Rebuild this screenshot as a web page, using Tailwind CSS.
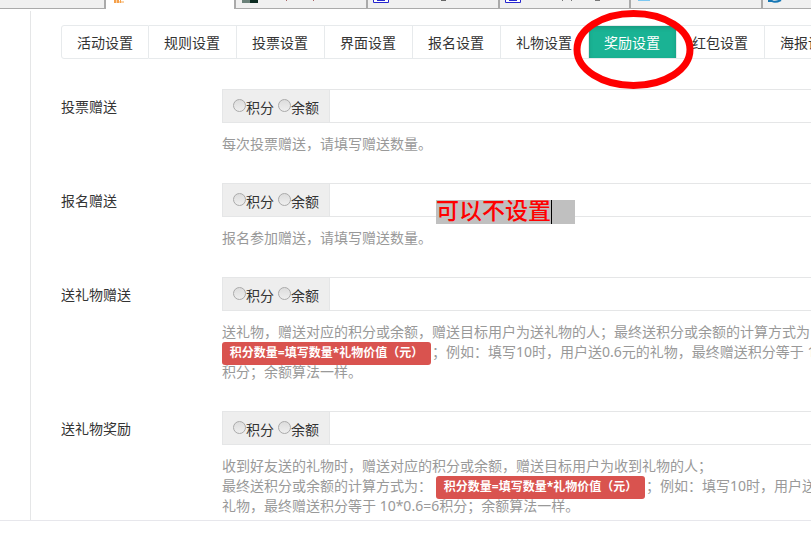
<!DOCTYPE html>
<html lang="zh-CN">
<head>
<meta charset="utf-8">
<meta name="viewport" content="width=device-width, initial-scale=1">
<title>奖励设置</title>
<script src="https://cdn.jsdelivr.net/npm/@tailwindcss/browser@4"></script>
</head>
<body class="relative overflow-hidden bg-white font-['Noto_Sans','Noto_Sans_CJK_SC',sans-serif] text-sm leading-5 text-[#333]">

<!-- Browser tab strip -->
<div class="flex h-[9px] overflow-hidden bg-[#f0f0f0]" aria-hidden="true">
  <div class="w-[106px] shrink-0 border-r-2 border-b border-[#aaa]"></div>
  <div class="w-[128px] shrink-0 bg-white pl-2">
    <svg class="block" width="10" height="3" viewBox="0 0 10 3"><path fill="#f5a04a" d="M0 0h2v3H0zM3 0h2v3H3zM6 0h1v3H6z"/><path fill="#fbd3a8" d="M2 0h1v3H2zM5 1h1v2H5zM7 1h3v2H7z"/></svg>
  </div>
  <div class="w-[132px] shrink-0 border-b border-l-2 border-[#aaa] pl-[6px]">
    <svg class="block" width="80" height="3" viewBox="0 0 80 3"><path fill="#6b8179" d="M0 0h8v3H0z"/><path fill="#0b2a20" d="M8 0h8v3H8z"/><path fill="#a66" d="M44 0h1v1h-1zM71 0h1v1h-1z"/></svg>
  </div>
  <div class="w-[132px] shrink-0 border-b border-l-2 border-[#aaa] pl-[5px]">
    <svg class="block" width="90" height="3" viewBox="0 0 90 3"><path fill="#fff" stroke="#2626cf" d="M.5-1v3.500h15V-1"/><path fill="#2626cf" d="M4 0h8v1H4z"/><path fill="#666" d="M68 0h5v1h-5z"/></svg>
  </div>
  <div class="w-[131px] shrink-0 border-b border-l-2 border-[#aaa] pl-[5px]">
    <svg class="block" width="100" height="3" viewBox="0 0 100 3"><path fill="#fff" stroke="#2626cf" d="M.5-1v3.500h15V-1"/><path fill="#2626cf" d="M4 0h8v1H4z"/><path fill="#777" d="M57 0h1v1h-1zM66 0h1v1h-1zM90 0h5v1h-5z"/></svg>
  </div>
  <div class="w-[132px] shrink-0 border-b border-l-2 border-[#aaa] pl-[7px]">
    <svg class="block" width="14" height="3" viewBox="0 0 14 3"><path fill="#7cc8f2" d="M0 0h12v1H0z"/></svg>
  </div>
  <div class="grow border-b border-l-2 border-[#aaa] pl-[5px]">
    <svg class="block" width="14" height="3" viewBox="0 0 14 3"><path fill="none" stroke="#1677b5" stroke-width="2" d="M0 1h4q3 2 9-1"/></svg>
  </div>
</div>

<main class="mt-[2px] overflow-hidden border-b border-[#e7e7ec]">
  <div class="ml-[30px] border-l border-[#e5e6e7] pt-[14px] pb-1 pl-[30px]">

    <nav class="mb-[30px] flex h-[34px] whitespace-nowrap" aria-label="设置">
      <a href="#" class="w-[88px] shrink-0 rounded-l-[3px] border border-[#e7eaec] pt-[7px] text-center">活动设置</a>
      <a href="#" class="w-[88px] shrink-0 border-y border-r border-[#e7eaec] pt-[7px] pl-[15px]">规则设置</a>
      <a href="#" class="w-[88px] shrink-0 border-y border-r border-[#e7eaec] pt-[7px] pl-[15px]">投票设置</a>
      <a href="#" class="w-[88px] shrink-0 border-y border-r border-[#e7eaec] pt-[7px] pl-[15px]">界面设置</a>
      <a href="#" class="w-[88px] shrink-0 border-y border-r border-[#e7eaec] pt-[7px] pl-[15px]">报名设置</a>
      <a href="#" class="w-[88px] shrink-0 border-y border-r border-[#e7eaec] pt-[7px] pl-[15px]">礼物设置</a>
      <a href="#" aria-current="page" class="w-[88px] shrink-0 border-y border-r border-[#e7eaec] bg-[#1ab394] bg-clip-padding pt-[7px] pl-[15px] text-white inset-shadow-[0_2px_4px_rgb(0_0_0/0.15)]">奖励设置</a>
      <a href="#" class="w-[88px] shrink-0 border-y border-r border-[#e7eaec] pt-[7px] pl-[15px]">红包设置</a>
      <a href="#" class="w-[88px] shrink-0 border-y border-r border-[#e7eaec] pt-[7px] pl-[15px]">海报设置</a>
    </nav>

    <form class="flex flex-col gap-[29px]">
      <div class="flex">
        <label for="vote" class="w-[161px] shrink-0 pt-2">投票赠送</label>
        <div class="min-w-0 grow whitespace-nowrap">
          <div class="flex h-[34px] border-y border-l border-[#e5e6e7]">
            <div class="flex w-[107px] shrink-0 items-center gap-1 border-r border-[#e5e6e7] bg-[#eee] pl-[10px]">
              <label class="flex items-center pt-[3px]"><input type="radio" name="vote-kind" class="mb-[4px] size-[13px] appearance-none rounded-full border border-[#aaa] bg-linear-to-b from-[#ddd] to-[#eee]">积分</label>
              <label class="flex items-center pt-[3px]"><input type="radio" name="vote-kind" class="mb-[4px] size-[13px] appearance-none rounded-full border border-[#aaa] bg-linear-to-b from-[#ddd] to-[#eee]">余额</label>
            </div>
            <input id="vote" type="text" class="min-w-0 grow px-3 outline-none">
          </div>
          <p class="mt-[11px] text-[#999]">每次投票赠送，请填写赠送数量。</p>
        </div>
      </div>

      <div class="flex">
        <label for="join" class="w-[161px] shrink-0 pt-2">报名赠送</label>
        <div class="min-w-0 grow whitespace-nowrap">
          <div class="flex h-[34px] border-y border-l border-[#e5e6e7]">
            <div class="flex w-[107px] shrink-0 items-center gap-1 border-r border-[#e5e6e7] bg-[#eee] pl-[10px]">
              <label class="flex items-center pt-[3px]"><input type="radio" name="join-kind" class="mb-[4px] size-[13px] appearance-none rounded-full border border-[#aaa] bg-linear-to-b from-[#ddd] to-[#eee]">积分</label>
              <label class="flex items-center pt-[3px]"><input type="radio" name="join-kind" class="mb-[4px] size-[13px] appearance-none rounded-full border border-[#aaa] bg-linear-to-b from-[#ddd] to-[#eee]">余额</label>
            </div>
            <input id="join" type="text" class="min-w-0 grow px-3 outline-none">
          </div>
          <p class="mt-[11px] text-[#999]">报名参加赠送，请填写赠送数量。</p>
        </div>
      </div>

      <div class="flex">
        <label for="gift" class="w-[161px] shrink-0 pt-2">送礼物赠送</label>
        <div class="min-w-0 grow whitespace-nowrap">
          <div class="flex h-[34px] border-y border-l border-[#e5e6e7]">
            <div class="flex w-[107px] shrink-0 items-center gap-1 border-r border-[#e5e6e7] bg-[#eee] pl-[10px]">
              <label class="flex items-center pt-[3px]"><input type="radio" name="gift-kind" class="mb-[4px] size-[13px] appearance-none rounded-full border border-[#aaa] bg-linear-to-b from-[#ddd] to-[#eee]">积分</label>
              <label class="flex items-center pt-[3px]"><input type="radio" name="gift-kind" class="mb-[4px] size-[13px] appearance-none rounded-full border border-[#aaa] bg-linear-to-b from-[#ddd] to-[#eee]">余额</label>
            </div>
            <input id="gift" type="text" class="min-w-0 grow px-3 outline-none">
          </div>
          <div class="mt-[11px] text-[#999]">
            <p>送礼物，赠送对应的积分或余额，赠送目标用户为送礼物的人；最终送积分或余额的计算方式为</p>
            <p class="flex h-5 items-start"><strong class="h-[23px] w-[209px] shrink-0 rounded-[3px] bg-[#d9534f] text-center text-xs leading-[22px] font-bold text-white">积分数量=填写数量*礼物价值（元）</strong><span class="pl-px">；例如：填写10时，用户送0.6元的礼物，最终赠送积分等于 1</span></p>
            <p>积分；余额算法一样。</p>
          </div>
        </div>
      </div>

      <div class="flex">
        <label for="reward" class="w-[161px] shrink-0 pt-2">送礼物奖励</label>
        <div class="min-w-0 grow whitespace-nowrap">
          <div class="flex h-[34px] border-y border-l border-[#e5e6e7]">
            <div class="flex w-[107px] shrink-0 items-center gap-1 border-r border-[#e5e6e7] bg-[#eee] pl-[10px]">
              <label class="flex items-center pt-[3px]"><input type="radio" name="reward-kind" class="mb-[4px] size-[13px] appearance-none rounded-full border border-[#aaa] bg-linear-to-b from-[#ddd] to-[#eee]">积分</label>
              <label class="flex items-center pt-[3px]"><input type="radio" name="reward-kind" class="mb-[4px] size-[13px] appearance-none rounded-full border border-[#aaa] bg-linear-to-b from-[#ddd] to-[#eee]">余额</label>
            </div>
            <input id="reward" type="text" class="min-w-0 grow px-3 outline-none">
          </div>
          <div class="mt-[11px] text-[#999]">
            <p>收到好友送的礼物时，赠送对应的积分或余额，赠送目标用户为收到礼物的人；</p>
            <p class="flex h-5 items-start"><span class="pr-1">最终送积分或余额的计算方式为：</span><strong class="h-[23px] w-[209px] shrink-0 rounded-[3px] bg-[#d9534f] text-center text-xs leading-[22px] font-bold text-white">积分数量=填写数量*礼物价值（元）</strong><span class="pl-px">；例如：填写10时，用户送</span></p>
            <p>礼物，最终赠送积分等于 10*0.6=6积分；余额算法一样。</p>
          </div>
        </div>
      </div>
    </form>
  </div>
</main>

<!-- Annotations laid over the page -->
<svg class="pointer-events-none absolute top-[9px] left-[573px]" width="121" height="81" viewBox="0 0 121 81" fill="none" stroke="#f00" stroke-width="7" aria-hidden="true"><ellipse cx="60.500" cy="40.500" rx="56.500" ry="36"/></svg>
<div class="absolute top-[200px] left-[436px] flex h-6 w-[139px] bg-[#c0c0c0] font-['Liberation_Serif','Noto_Sans_CJK_SC',serif] text-[23px] leading-6 font-medium whitespace-nowrap text-[#f00]"><span class="border-r border-black">可以不设置</span></div>

</body>
</html>
